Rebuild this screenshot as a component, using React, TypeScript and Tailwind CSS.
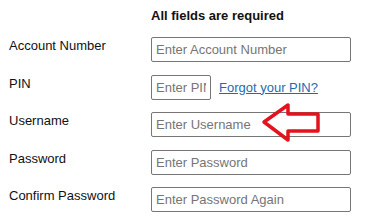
const rows = [
  { label: "Account Number", placeholder: "Enter Account Number" },
  { label: "PIN", placeholder: "Enter PIN", pin: true },
  { label: "Username", placeholder: "Enter Username", arrow: true },
  { label: "Password", placeholder: "Enter Password" },
  { label: "Confirm Password", placeholder: "Enter Password Again" },
];

function RedArrow() {
  return (
    <svg
      className="absolute left-[109px] top-[-10px] pointer-events-none"
      width="62"
      height="41"
      viewBox="0 0 62 41"
      fill="none"
    >
      <path
        d="M4 20 L28 3 L28 12 L58 12 L58 29 L28 29 L28 38 Z"
        stroke="#e3121c"
        strokeWidth="3.5"
        strokeLinejoin="round"
      />
    </svg>
  );
}

export default function App() {
  return (
    <div className="w-[386px] h-[216px] bg-white overflow-hidden pl-[9px] pt-[8px] font-['Liberation_Sans',Arial,sans-serif] text-[13px] leading-[15px] text-[#111]">
      <div className="pl-[142px] font-bold">All fields are required</div>

      <div className="mt-[14px] flex flex-col gap-[12.5px]">
        {rows.map((r) => (
          <div key={r.label} className="flex items-start h-[25px]">
            <label className="w-[142px] pt-px">{r.label}</label>
            {r.pin ? (
              <div className="flex items-center gap-[8px]">
                <input
                  placeholder={r.placeholder}
                  className="w-[60px] h-[25px] border border-[#767676] rounded-[2px] px-[4px] text-[13px] placeholder:text-[#757575] outline-none"
                />
                <a href="#" className="text-[#1b6cb3] underline">
                  Forgot your PIN?
                </a>
              </div>
            ) : (
              <div className="relative">
                <input
                  placeholder={r.placeholder}
                  className="w-[200px] h-[25px] border border-[#767676] rounded-[2px] px-[4px] text-[13px] placeholder:text-[#757575] outline-none"
                />
                {r.arrow && <RedArrow />}
              </div>
            )}
          </div>
        ))}
      </div>
    </div>
  );
}
